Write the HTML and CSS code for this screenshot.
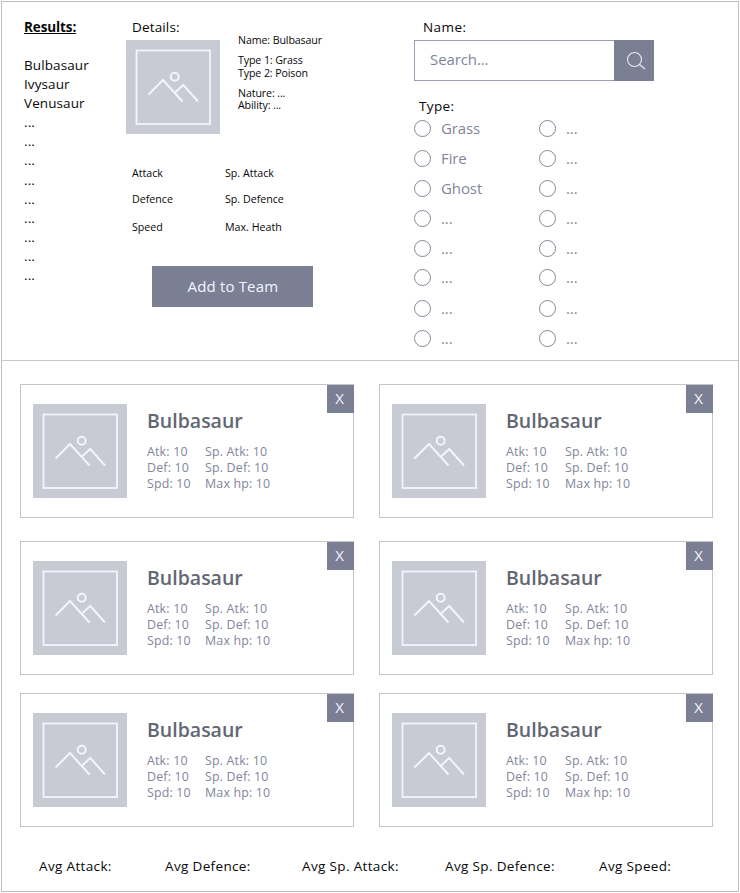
FILE: index.html
```html
<!DOCTYPE html>
<html lang="en">
<head>
<meta charset="utf-8">
<title>Team Builder</title>
<link rel="stylesheet" href="styles.css">
</head>
<body>
<svg width="0" height="0" class="defs">
  <symbol id="picture" viewBox="0 0 94 94">
    <rect width="94" height="94" fill="#c8cad4"/>
    <g fill="none" stroke="#f3f5fb" stroke-width="2">
      <rect x="10.5" y="10.5" width="73.5" height="73.5" stroke-width="1.8"/>
      <circle cx="48.7" cy="36.8" r="4"/>
      <path d="M22.5 54.5 37 40l19.500 21.500M49 52.500 57.300 45 72 61.500"/>
    </g>
  </symbol>
</svg>
<div class="page">
  <section class="top">
    <div class="results">
      <h2>Results:</h2>
      <ul>
        <li>Bulbasaur</li><li>Ivysaur</li><li>Venusaur</li>
        <li>...</li><li>...</li><li>...</li><li>...</li><li>...</li><li>...</li><li>...</li><li>...</li><li>...</li>
      </ul>
    </div>
    <div class="details">
      <h3>Details:</h3>
      <div class="summary">
        <svg class="pic"><use href="#picture"/></svg>
        <div class="facts">
          <p>Name: Bulbasaur</p>
          <p>Type 1: Grass<br>Type 2: Poison</p>
          <p>Nature: ...<br>Ability: ...</p>
        </div>
      </div>
      <div class="attributes">
        <span>Attack</span><span>Sp. Attack</span>
        <span>Defence</span><span>Sp. Defence</span>
        <span>Speed</span><span>Max. Heath</span>
      </div>
      <button class="add">Add to Team</button>
    </div>
    <div class="filters">
      <h3 class="name-label">Name:</h3>
      <div class="search">
        <span class="query">Search...</span>
        <span class="go"><svg width="20" height="20" viewBox="0 0 20 20" fill="none" stroke="#e8eaf2" stroke-width="1.1"><circle cx="8.500" cy="8.500" r="7"/><path d="M13.500 13.500 19 18"/></svg></span>
      </div>
      <h3 class="type-label">Type:</h3>
      <div class="types">
        <label><i></i>Grass</label><label><i></i>...</label>
        <label><i></i>Fire</label><label><i></i>...</label>
        <label><i></i>Ghost</label><label><i></i>...</label>
        <label><i></i>...</label><label><i></i>...</label>
        <label><i></i>...</label><label><i></i>...</label>
        <label><i></i>...</label><label><i></i>...</label>
        <label><i></i>...</label><label><i></i>...</label>
        <label><i></i>...</label><label><i></i>...</label>
      </div>
    </div>
  </section>
  <section class="team">
    <article class="card"><svg class="pic"><use href="#picture"/></svg><div class="info"><h4>Bulbasaur</h4><div class="stats"><span>Atk: 10</span><span>Sp. Atk: 10</span><span>Def: 10</span><span>Sp. Def: 10</span><span>Spd: 10</span><span>Max hp: 10</span></div></div><button class="close">X</button></article>
    <article class="card"><svg class="pic"><use href="#picture"/></svg><div class="info"><h4>Bulbasaur</h4><div class="stats"><span>Atk: 10</span><span>Sp. Atk: 10</span><span>Def: 10</span><span>Sp. Def: 10</span><span>Spd: 10</span><span>Max hp: 10</span></div></div><button class="close">X</button></article>
    <article class="card"><svg class="pic"><use href="#picture"/></svg><div class="info"><h4>Bulbasaur</h4><div class="stats"><span>Atk: 10</span><span>Sp. Atk: 10</span><span>Def: 10</span><span>Sp. Def: 10</span><span>Spd: 10</span><span>Max hp: 10</span></div></div><button class="close">X</button></article>
    <article class="card"><svg class="pic"><use href="#picture"/></svg><div class="info"><h4>Bulbasaur</h4><div class="stats"><span>Atk: 10</span><span>Sp. Atk: 10</span><span>Def: 10</span><span>Sp. Def: 10</span><span>Spd: 10</span><span>Max hp: 10</span></div></div><button class="close">X</button></article>
    <article class="card"><svg class="pic"><use href="#picture"/></svg><div class="info"><h4>Bulbasaur</h4><div class="stats"><span>Atk: 10</span><span>Sp. Atk: 10</span><span>Def: 10</span><span>Sp. Def: 10</span><span>Spd: 10</span><span>Max hp: 10</span></div></div><button class="close">X</button></article>
    <article class="card"><svg class="pic"><use href="#picture"/></svg><div class="info"><h4>Bulbasaur</h4><div class="stats"><span>Atk: 10</span><span>Sp. Atk: 10</span><span>Def: 10</span><span>Sp. Def: 10</span><span>Spd: 10</span><span>Max hp: 10</span></div></div><button class="close">X</button></article>
  </section>
  <footer class="averages">
    <span>Avg Attack:</span><span>Avg Defence:</span><span>Avg Sp. Attack:</span><span>Avg Sp. Defence:</span><span>Avg Speed:</span>
  </footer>
</div>
</body>
</html>
```
FILE: styles.css
```css
* { box-sizing: border-box; margin: 0; padding: 0; }
body {
  background: #fff;
  color: #080808;
  font: 13.5px/19px "Open Sans", "Noto Sans", sans-serif;
  white-space: nowrap;
  overflow: hidden;
}
.defs { display: none; }
.page { width: 738px; height: 891px; margin: 1px; border: 1px solid #bfbfbf; }
h2, h3 { font-size: inherit; font-weight: 400; line-height: 19px; }
ul { list-style: none; }
button { border: 0; font-family: inherit; color: #f4f6ff; background: #7a7f93; }
.pic { display: block; width: 94px; height: 94px; flex: none; }

.top {
  display: grid;
  grid-template-columns: 102px 288px 1fr;
  height: 359px;
  padding: 16px 0 0 22px;
  border-bottom: 1px solid #c8c8c8;
}
.results h2 { font-weight: 700; text-decoration: underline; letter-spacing: -0.1px; }
.results ul { margin-top: 19px; line-height: 19.1px; letter-spacing: 0.1px; }

.details h3 { padding-left: 6px; letter-spacing: 0.15px; }
.summary { display: flex; gap: 18px; margin-top: 3px; }
.facts { font-size: 10.67px; line-height: 12.5px; letter-spacing: -0.12px; margin-top: -6px; }
.facts p { margin-bottom: 7.7px; }
.attributes {
  display: grid;
  grid-template-columns: 93px 1fr;
  grid-template-rows: 26px 27px 28px;
  align-items: center;
  margin: 26px 0 0 6px;
  font-size: 10.67px;
}
.add { display: block; width: 161px; height: 41px; margin: 25px 0 0 26.4px; padding-bottom: 2px; font-size: 15px; letter-spacing: 0.15px; }

.name-label { padding-left: 9px; letter-spacing: 0.45px; }
.search {
  display: flex;
  width: 240px;
  height: 41px;
  margin-top: 3px;
  border: 1px solid #9a9eae;
  color: #81859a;
  font-size: 15px;
  letter-spacing: -0.1px;
}
.query { flex: 1; padding-left: 15px; line-height: 37px; }
.go { width: 40px; margin: -1px; padding: 11px 0 0 12px; background: #7a7f93; }
.go svg { display: block; }
.type-label { padding-left: 5px; margin-top: 16px; letter-spacing: 0.35px; }
.types { display: grid; grid-template-columns: 125px 125px; grid-template-rows: 30.2px 30.2px 30.2px 29.4px 29.4px 30.2px 30.2px 30.2px; margin: -2.6px 0 0 -0.5px; color: #81859a; font-size: 15px; letter-spacing: -0.1px; }
.types label { display: flex; align-items: center; gap: 10.5px; }
.types i { width: 17px; height: 17px; border: 1px solid #858998; border-radius: 50%; }

.team {
  display: grid;
  grid-template-columns: 334px 334px;
  grid-template-rows: 134px 134px 134px;
  column-gap: 25px;
  row-gap: 20px;
  padding: 24px 0 0 18px;
}
.card { position: relative; display: flex; gap: 20px; height: 134px; padding: 19px 12px; border: 1px solid #c4c5c8; }
.card:nth-child(-n+2) { margin-top: -1px; }
.card:nth-child(3), .card:nth-child(4) { margin-top: 2px; }
.info { color: #81859a; padding-top: 3px; }
.info h4 { color: #626772; font-size: 19.5px; line-height: 27px; font-weight: 600; }
.stats { display: grid; grid-template-columns: 58px auto; grid-auto-rows: 15.9px; margin-top: 10.3px; font-size: 12.4px; line-height: 15.9px; letter-spacing: 0.18px; }
.card:nth-child(even) .stats { grid-template-columns: 59px auto; }
.close { position: absolute; top: 0; right: -1px; width: 27px; height: 28px; padding: 0 2px 2px 0; font-size: 15px; }

.averages { display: grid; grid-template-columns: 126px 137px 143px 154px 1fr; margin: 30px 0 0 37px; letter-spacing: 0.35px; }
```
